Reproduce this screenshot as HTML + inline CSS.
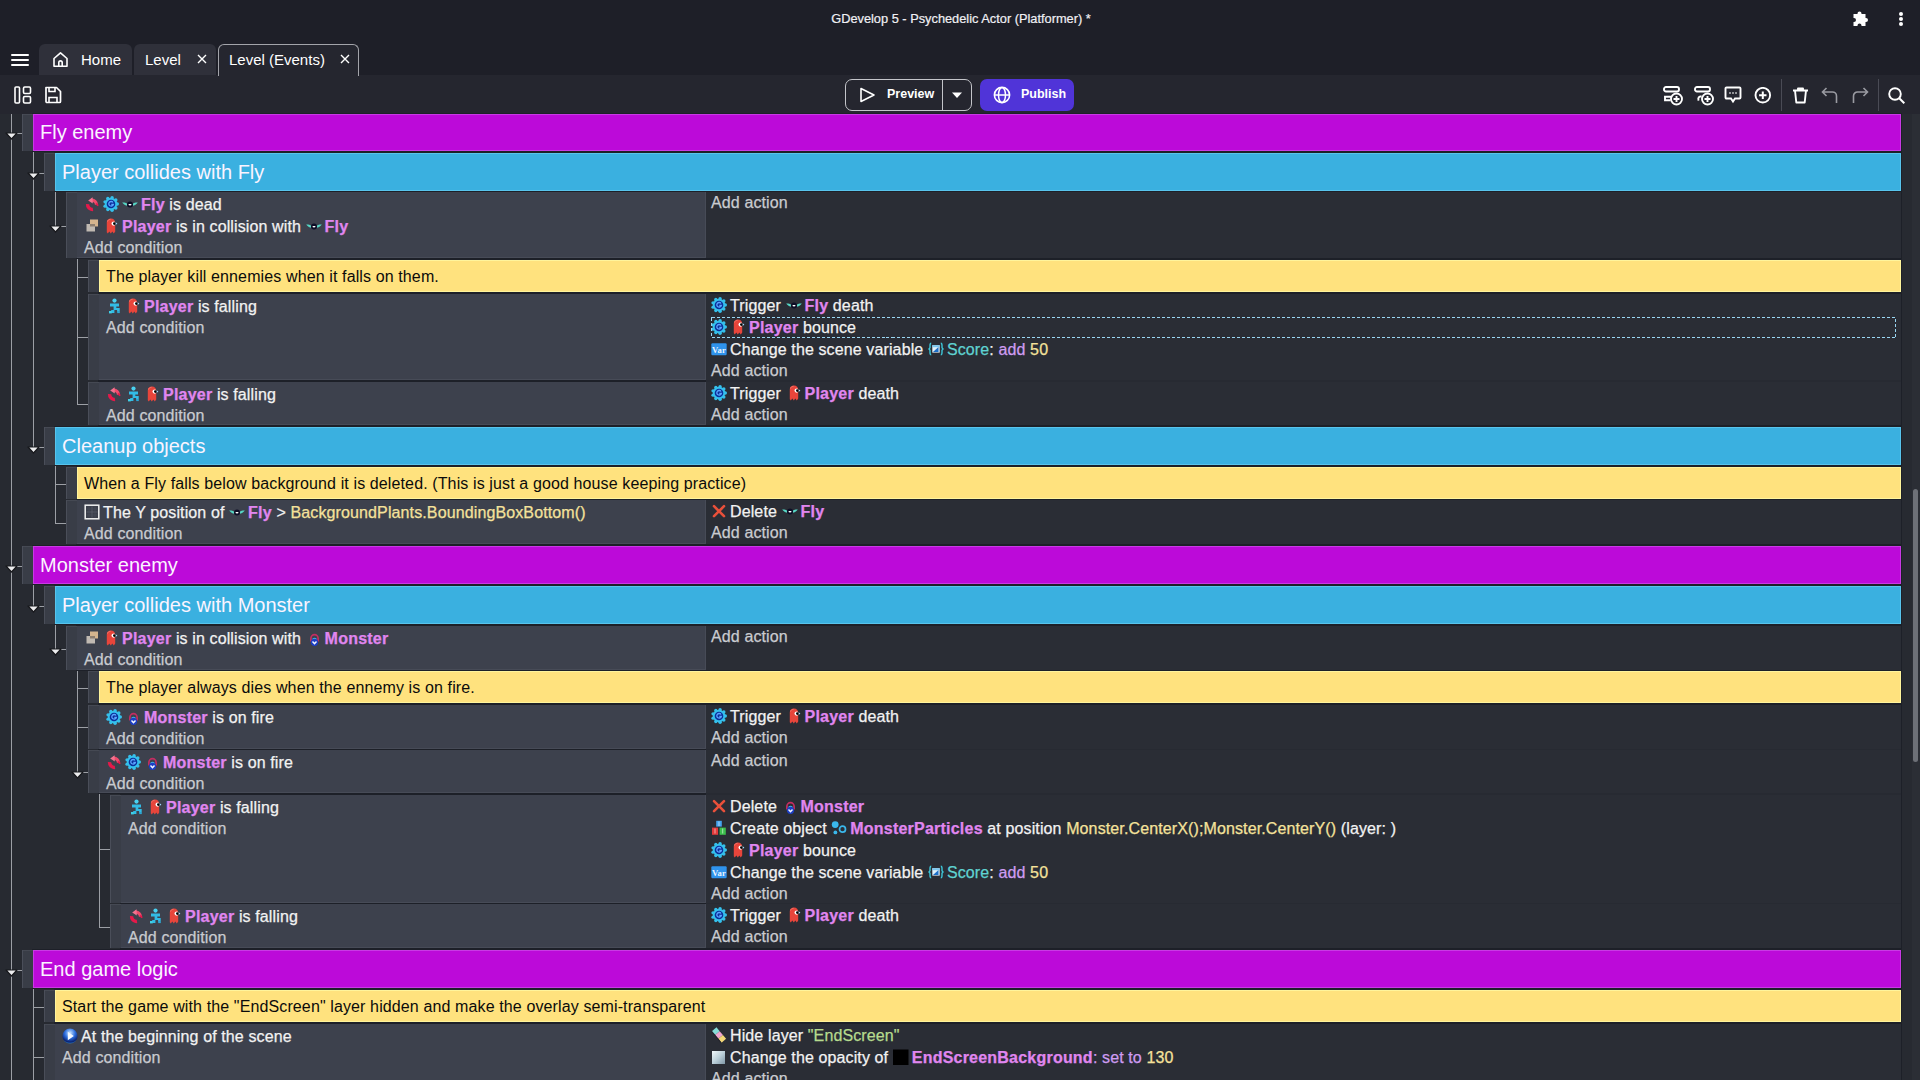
<!DOCTYPE html><html><head><meta charset="utf-8"><style>

*{margin:0;padding:0;box-sizing:border-box}
html,body{width:1920px;height:1080px;overflow:hidden;background:#272a31;font-family:"Liberation Sans",sans-serif}
body>div,body>svg{position:absolute}
.r{position:absolute;white-space:nowrap;font-size:16px;line-height:22px;height:22px;color:#f2f2f2;letter-spacing:0.12px;-webkit-text-stroke:0.25px currentColor}
.r .b{display:inline-block;width:16px;height:16px;margin-right:3px;vertical-align:-2px;font-style:normal}
.r .b svg{display:block}
.r b.o{font-weight:bold;color:#e086f0;letter-spacing:0.22px}
.ad{color:#c9cbd0}
.ex{color:#f5e29b}
.va{color:#5fd3d2}
.op{color:#cf9cf2}
.st{color:#b6db8e}
.g{position:absolute;white-space:nowrap;font-size:20px;color:#fbf4ff}
.cm{position:absolute;white-space:nowrap;font-size:16px;line-height:22px;color:#0b0b0b;letter-spacing:0.12px}
.tb{position:absolute;white-space:nowrap;color:#fff}

</style></head><body>
<div style="left:0px;top:0px;width:1920px;height:75px;background:#1e1f28;"></div>
<div class="tb" style="left:1px;top:10px;width:1920px;text-align:center;font-size:12.8px;line-height:18px;color:#f0f0f4;-webkit-text-stroke:0.2px #f0f0f4">GDevelop 5 - Psychedelic Actor (Platformer) *</div>
<svg style="position:absolute;left:1852px;top:11px" width="17" height="16" viewBox="0 0 17 16"><path d="M7.5 0.5a2 2 0 0 1 2 2V3h4v4h.5a2 2 0 0 1 0 4H13.5v4h-4v-.5a2 2 0 0 0-4 0v.5h-4v-4h.5a2 2 0 0 0 0-4H1.5V3h4v-.5a2 2 0 0 1 2-2z" fill="#fff"/></svg>
<div style="left:1899px;top:12px;width:4px;height:4px;border-radius:2px;background:#fff"></div>
<div style="left:1899px;top:17px;width:4px;height:4px;border-radius:2px;background:#fff"></div>
<div style="left:1899px;top:22px;width:4px;height:4px;border-radius:2px;background:#fff"></div>
<div style="left:11px;top:54px;width:18px;height:2px;border-radius:1px;background:#fff"></div>
<div style="left:11px;top:59px;width:18px;height:2px;border-radius:1px;background:#fff"></div>
<div style="left:11px;top:64px;width:18px;height:2px;border-radius:1px;background:#fff"></div>
<div style="left:39px;top:44px;width:93px;height:31px;background:#2f303a;border-radius:6px 6px 0 0"></div>
<div style="left:134px;top:44px;width:82px;height:31px;background:#2f303a;border-radius:6px 6px 0 0"></div>
<div style="left:0px;top:75px;width:1920px;height:39px;background:#25262f;"></div>
<div style="left:218px;top:44px;width:141px;height:32px;background:#25262f;border:1.5px solid #a3a4aa;border-bottom:none;border-radius:6px 6px 0 0"></div>
<svg style="position:absolute;left:52px;top:51px" width="17" height="17" viewBox="0 0 17 17"><path d="M2 7.5L8.5 1.8 15 7.5V15.2H2z" fill="none" stroke="#fff" stroke-width="1.6" stroke-linejoin="round"/><path d="M6.8 15.2v-3.6a1.7 1.7 0 0 1 3.4 0v3.6" fill="none" stroke="#fff" stroke-width="1.6"/></svg>
<div class="tb" style="left:81px;top:51px;font-size:15px;line-height:18px">Home</div>
<div class="tb" style="left:145px;top:51px;font-size:15px;line-height:18px">Level</div>
<div class="tb" style="left:229px;top:51px;font-size:15px;line-height:18px">Level (Events)</div>
<svg style="position:absolute;left:197px;top:54px" width="10" height="10" viewBox="0 0 10 10"><path d="M1 1l8 8M9 1L1 9" stroke="#fff" stroke-width="1.4"/></svg>
<svg style="position:absolute;left:340px;top:54px" width="10" height="10" viewBox="0 0 10 10"><path d="M1 1l8 8M9 1L1 9" stroke="#fff" stroke-width="1.4"/></svg>
<svg style="position:absolute;left:14px;top:86px" width="18" height="18" viewBox="0 0 18 18"><rect x="1" y="1" width="4.5" height="16" rx="1" fill="none" stroke="#fff" stroke-width="1.6"/><rect x="9.5" y="1" width="7" height="6.5" rx="1.2" fill="none" stroke="#fff" stroke-width="1.6"/><rect x="9.5" y="10.5" width="7" height="6.5" rx="1.2" fill="none" stroke="#fff" stroke-width="1.6"/></svg>
<svg style="position:absolute;left:44px;top:86px" width="18" height="18" viewBox="0 0 18 18"><path d="M2 1.5h10.5l4 4v10a1 1 0 0 1-1 1H3a1 1 0 0 1-1-1z" fill="none" stroke="#fff" stroke-width="1.7" stroke-linejoin="round"/><path d="M5 1.5v4h6v-4M5 16.5v-5h8v5" fill="none" stroke="#fff" stroke-width="1.6"/></svg>
<div style="left:845px;top:79px;width:127px;height:32px;border:1.3px solid #c4c5ca;border-radius:7px"></div>
<div style="left:942px;top:80px;width:1px;height:30px;background:#c4c5ca;"></div>
<svg style="position:absolute;left:859px;top:87px" width="17" height="16" viewBox="0 0 17 16"><path d="M2 1.5L15 8 2 14.5z" fill="none" stroke="#fff" stroke-width="1.6" stroke-linejoin="round"/></svg>
<div class="tb" style="left:887px;top:86px;font-size:12.5px;line-height:16px;font-weight:bold">Preview</div>
<svg style="position:absolute;left:951px;top:92px" width="12" height="7" viewBox="0 0 12 7"><path d="M1 0.5h10L6 6z" fill="#fff"/></svg>
<div style="left:980px;top:79px;width:94px;height:32px;background:#5034d8;border-radius:7px"></div>
<svg style="position:absolute;left:993px;top:86px" width="18" height="18" viewBox="0 0 18 18"><circle cx="9" cy="9" r="7.6" fill="none" stroke="#fff" stroke-width="1.6"/><ellipse cx="9" cy="9" rx="3.5" ry="7.6" fill="none" stroke="#fff" stroke-width="1.5"/><path d="M1.5 9h15" stroke="#fff" stroke-width="1.5"/></svg>
<div class="tb" style="left:1021px;top:86px;font-size:12.5px;line-height:16px;font-weight:bold">Publish</div>
<svg style="position:absolute;left:1663px;top:86px" width="21" height="20" viewBox="0 0 21 20"><rect x="1" y="1" width="15" height="4.5" rx="2" stroke="#fff" stroke-width="1.9" fill="none"/><path d="M8.5 10.8H2v3.4H7.5" stroke="#fff" stroke-width="1.9" fill="none"/><circle cx="13.5" cy="13" r="5.5" stroke="#fff" stroke-width="1.9" fill="none"/><path d="M13.5 10v6M10.5 13h6" stroke="#fff" stroke-width="1.9" fill="none"/></svg>
<svg style="position:absolute;left:1694px;top:86px" width="21" height="20" viewBox="0 0 21 20"><rect x="1" y="1" width="15" height="4.5" rx="2" stroke="#fff" stroke-width="1.9" fill="none"/><path d="M7.5 10.2C5 10.2 3.6 11.8 4.6 14.6" stroke="#fff" stroke-width="1.9" fill="none"/><circle cx="13.5" cy="13" r="5.5" stroke="#fff" stroke-width="1.9" fill="none"/><path d="M13.5 10v6M10.5 13h6" stroke="#fff" stroke-width="1.9" fill="none"/></svg>
<svg style="position:absolute;left:1724px;top:86px" width="18" height="18" viewBox="0 0 18 18"><path d="M2.5 1.5h13a1 1 0 0 1 1 1v9a1 1 0 0 1-1 1h-4.5L9 15.5 7 12.5H2.5a1 1 0 0 1-1-1v-9a1 1 0 0 1 1-1z" stroke="#fff" stroke-width="1.9" fill="none"/><path d="M5.5 7h1M8.5 7h1M11.5 7h1" stroke="#fff" stroke-width="1.8"/></svg>
<svg style="position:absolute;left:1754px;top:87px" width="18" height="17" viewBox="0 0 18 17"><circle cx="8.8" cy="8.2" r="7.3" stroke="#fff" stroke-width="1.9" fill="none"/><path d="M8.8 4.5v7.4M5.1 8.2h7.4" stroke="#fff" stroke-width="2"/></svg>
<div style="left:1781px;top:79px;width:1px;height:32px;background:#4a4b55;"></div>
<svg style="position:absolute;left:1792px;top:87px" width="17" height="17" viewBox="0 0 17 17"><path d="M1 3.5h15M6 3.5V1.5h5v2M3 3.5l1.3 12h8.4L14 3.5" stroke="#fff" stroke-width="1.9" fill="none" stroke-linejoin="round"/></svg>
<svg style="position:absolute;left:1821px;top:87px" width="18" height="17" viewBox="0 0 18 17"><path d="M5.5 1L1.5 5l4 4M1.5 5h10a4 4 0 0 1 4 4v7" stroke="#9a9ba2" stroke-width="1.6" fill="none"/></svg>
<svg style="position:absolute;left:1851px;top:87px" width="18" height="17" viewBox="0 0 18 17"><path d="M12.5 1l4 4-4 4M16.5 5h-10a4 4 0 0 0-4 4v7" stroke="#9a9ba2" stroke-width="1.6" fill="none"/></svg>
<div style="left:1878px;top:79px;width:1px;height:32px;background:#4a4b55;"></div>
<svg style="position:absolute;left:1888px;top:87px" width="18" height="17" viewBox="0 0 18 17"><circle cx="7" cy="7" r="5.8" stroke="#fff" stroke-width="1.9" fill="none"/><path d="M11.3 11.3l5 5" stroke="#fff" stroke-width="2"/></svg>
<div style="left:0px;top:114px;width:1920px;height:966px;background:#272a31;"></div>
<div style="left:1912px;top:114px;width:8px;height:966px;background:#2b2e35;"></div>
<div style="left:1913px;top:489px;width:5px;height:273px;border-radius:3px;background:#6d7077"></div>
<div style="left:11px;top:114px;width:1px;height:966px;background:#9c9fa5;"></div>
<div style="left:33px;top:151px;width:1px;height:296px;background:#9c9fa5;"></div>
<div style="left:55px;top:191px;width:1px;height:35px;background:#9c9fa5;"></div>
<div style="left:77px;top:258px;width:1px;height:146px;background:#9c9fa5;"></div>
<div style="left:55px;top:465px;width:1px;height:58px;background:#9c9fa5;"></div>
<div style="left:33px;top:584px;width:1px;height:22px;background:#9c9fa5;"></div>
<div style="left:55px;top:624px;width:1px;height:25px;background:#9c9fa5;"></div>
<div style="left:77px;top:670px;width:1px;height:102px;background:#9c9fa5;"></div>
<div style="left:99px;top:793px;width:1px;height:134px;background:#9c9fa5;"></div>
<div style="left:33px;top:988px;width:1px;height:92px;background:#9c9fa5;"></div>
<div style="left:11px;top:133px;width:11px;height:1px;background:#9c9fa5;"></div>
<div style="left:33px;top:173px;width:11px;height:1px;background:#9c9fa5;"></div>
<div style="left:55px;top:226px;width:11px;height:1px;background:#9c9fa5;"></div>
<div style="left:77px;top:277px;width:11px;height:1px;background:#9c9fa5;"></div>
<div style="left:77px;top:337px;width:11px;height:1px;background:#9c9fa5;"></div>
<div style="left:77px;top:404px;width:11px;height:1px;background:#9c9fa5;"></div>
<div style="left:33px;top:447px;width:11px;height:1px;background:#9c9fa5;"></div>
<div style="left:55px;top:484px;width:11px;height:1px;background:#9c9fa5;"></div>
<div style="left:55px;top:523px;width:11px;height:1px;background:#9c9fa5;"></div>
<div style="left:11px;top:566px;width:11px;height:1px;background:#9c9fa5;"></div>
<div style="left:33px;top:606px;width:11px;height:1px;background:#9c9fa5;"></div>
<div style="left:55px;top:649px;width:11px;height:1px;background:#9c9fa5;"></div>
<div style="left:77px;top:688px;width:11px;height:1px;background:#9c9fa5;"></div>
<div style="left:77px;top:727px;width:11px;height:1px;background:#9c9fa5;"></div>
<div style="left:77px;top:772px;width:11px;height:1px;background:#9c9fa5;"></div>
<div style="left:99px;top:849px;width:11px;height:1px;background:#9c9fa5;"></div>
<div style="left:99px;top:927px;width:11px;height:1px;background:#9c9fa5;"></div>
<div style="left:11px;top:970px;width:11px;height:1px;background:#9c9fa5;"></div>
<div style="left:33px;top:1007px;width:11px;height:1px;background:#9c9fa5;"></div>
<div style="left:33px;top:1057px;width:11px;height:1px;background:#9c9fa5;"></div>
<svg style="position:absolute;left:5px;top:132px" width="13" height="9" viewBox="0 0 13 9"><path d="M1 1h11L6.5 7z" fill="#ececee" stroke="#17181c" stroke-width="1.2" stroke-linejoin="round"/></svg>
<svg style="position:absolute;left:27px;top:172px" width="13" height="9" viewBox="0 0 13 9"><path d="M1 1h11L6.5 7z" fill="#ececee" stroke="#17181c" stroke-width="1.2" stroke-linejoin="round"/></svg>
<svg style="position:absolute;left:49px;top:225px" width="13" height="9" viewBox="0 0 13 9"><path d="M1 1h11L6.5 7z" fill="#ececee" stroke="#17181c" stroke-width="1.2" stroke-linejoin="round"/></svg>
<svg style="position:absolute;left:27px;top:446px" width="13" height="9" viewBox="0 0 13 9"><path d="M1 1h11L6.5 7z" fill="#ececee" stroke="#17181c" stroke-width="1.2" stroke-linejoin="round"/></svg>
<svg style="position:absolute;left:5px;top:565px" width="13" height="9" viewBox="0 0 13 9"><path d="M1 1h11L6.5 7z" fill="#ececee" stroke="#17181c" stroke-width="1.2" stroke-linejoin="round"/></svg>
<svg style="position:absolute;left:27px;top:605px" width="13" height="9" viewBox="0 0 13 9"><path d="M1 1h11L6.5 7z" fill="#ececee" stroke="#17181c" stroke-width="1.2" stroke-linejoin="round"/></svg>
<svg style="position:absolute;left:49px;top:648px" width="13" height="9" viewBox="0 0 13 9"><path d="M1 1h11L6.5 7z" fill="#ececee" stroke="#17181c" stroke-width="1.2" stroke-linejoin="round"/></svg>
<svg style="position:absolute;left:71px;top:771px" width="13" height="9" viewBox="0 0 13 9"><path d="M1 1h11L6.5 7z" fill="#ececee" stroke="#17181c" stroke-width="1.2" stroke-linejoin="round"/></svg>
<svg style="position:absolute;left:5px;top:969px" width="13" height="9" viewBox="0 0 13 9"><path d="M1 1h11L6.5 7z" fill="#ececee" stroke="#17181c" stroke-width="1.2" stroke-linejoin="round"/></svg>
<div style="left:32px;top:113px;width:1870px;height:39px;background:#1d2028;"></div>
<div style="left:22px;top:114px;width:11px;height:37px;background:#393d47;box-shadow:inset 1px 0 0 #4a4e59, inset 0 1px 0 #454953"></div>
<div style="left:33px;top:114px;width:1868px;height:37px;background:#bc0ad9;box-shadow:inset 0 0 0 1px #c93ae4"></div>
<div class="g" style="left:40px;top:114px;height:37px;line-height:37px">Fly enemy</div>
<div style="left:54px;top:152px;width:1848px;height:40px;background:#1d2028;"></div>
<div style="left:44px;top:153px;width:11px;height:38px;background:#393d47;box-shadow:inset 1px 0 0 #4a4e59, inset 0 1px 0 #454953"></div>
<div style="left:55px;top:153px;width:1846px;height:38px;background:#3ab0e0;box-shadow:inset 0 0 0 1px #58c4ec"></div>
<div class="g" style="left:62px;top:153px;height:38px;line-height:38px">Player collides with Fly</div>
<div style="left:76px;top:191px;width:1826px;height:68px;background:#1d2028;"></div>
<div style="left:66px;top:192px;width:11px;height:66px;background:#393d47;box-shadow:inset 1px 0 0 #4a4e59, inset 0 1px 0 #454953"></div>
<div style="left:77px;top:192px;width:629px;height:66px;background:#3d414d;box-shadow:inset -1px -1px 0 #474b57"></div>
<div style="left:706px;top:192px;width:1195px;height:66px;background:#2a2d35;"></div>
<div class="r" style="left:84px;top:194px"><i class="b"><svg class="ic" width="16" height="16" viewBox="0 0 16 16"><path d="M7.5 4.2a4.6 4.6 0 0 1 5 4.6" stroke="#ef4a6c" stroke-width="3.2" fill="none"/><path d="M4.2 4.4L8.6 1.2 8.8 7.6z" fill="#f3738f"/><path d="M3.6 8.2a4.8 4.8 0 0 0 5.4 5.2" stroke="#e5194a" stroke-width="3.4" fill="none"/><path d="M12.4 9.2l1.5-1.2" stroke="#e5194a" stroke-width="3"/></svg></i><i class="b"><svg class="ic" width="16" height="16" viewBox="0 0 16 16"><g fill="#35c0ec"><circle cx="14.30" cy="8.00" r="1.7"/><circle cx="12.83" cy="12.05" r="1.7"/><circle cx="9.09" cy="14.20" r="1.7"/><circle cx="4.85" cy="13.46" r="1.7"/><circle cx="2.08" cy="10.15" r="1.7"/><circle cx="2.08" cy="5.85" r="1.7"/><circle cx="4.85" cy="2.54" r="1.7"/><circle cx="9.09" cy="1.80" r="1.7"/><circle cx="12.83" cy="3.95" r="1.7"/><circle cx="8" cy="8" r="6.2"/></g><circle cx="8" cy="8" r="4.3" fill="#0a2f9a"/><path d="M10 6.5a2.3 2.3 0 1 0 .3 2H8.3" stroke="#5aa4ff" stroke-width="1.3" fill="none"/></svg></i><i class="b"><svg class="ic" width="16" height="16" viewBox="0 0 16 16"><path d="M0.2 6.6C2 6.4 4 7 5.4 7.8L4.8 9.8C3 9.2 1.2 8 0.2 6.6z" fill="#56d6c4"/><path d="M15.8 6.6C14 6.4 12 7 10.6 7.8l.6 2C13 9.2 14.8 8 15.8 6.6z" fill="#56d6c4"/><circle cx="8" cy="8.4" r="3" fill="#0e0e26"/><path d="M6.5 8.1a1.5 1.5 0 0 0 3 0z" fill="#fff"/></svg></i><b class="o">Fly</b> is dead</div>
<div class="r" style="left:84px;top:216px"><i class="b"><svg class="ic" width="16" height="16" viewBox="0 0 16 16"><rect x="6" y="1.5" width="8" height="7" fill="#d5b48e"/><rect x="2.5" y="6" width="8.5" height="7.5" fill="#c0b9b2"/><rect x="6" y="6" width="5" height="2.5" fill="#8d7e70"/></svg></i><i class="b"><svg class="ic" width="16" height="16" viewBox="0 0 16 16"><path d="M3.8 4.2C3.8 1.8 5.6 0.6 8 0.6c2.6 0 4.2 1.8 4.2 4.2v8.8l-1.4 1.8-1.5-1.8-1.5 1.8-1.5-1.8-1.5 1.8-1-1.2z" fill="#e8453b"/><path d="M4.5 3.5C5 2 6 1.4 7.5 1.3" stroke="#f07a70" stroke-width="1" fill="none"/><circle cx="10.6" cy="5.6" r="2.1" fill="#fff"/><circle cx="11.4" cy="5.6" r="1.4" fill="#000"/><circle cx="13.4" cy="5.6" r=".8" fill="#9fd8ff"/></svg></i><b class="o">Player</b> is in collision with <i class="b"><svg class="ic" width="16" height="16" viewBox="0 0 16 16"><path d="M0.2 6.6C2 6.4 4 7 5.4 7.8L4.8 9.8C3 9.2 1.2 8 0.2 6.6z" fill="#56d6c4"/><path d="M15.8 6.6C14 6.4 12 7 10.6 7.8l.6 2C13 9.2 14.8 8 15.8 6.6z" fill="#56d6c4"/><circle cx="8" cy="8.4" r="3" fill="#0e0e26"/><path d="M6.5 8.1a1.5 1.5 0 0 0 3 0z" fill="#fff"/></svg></i><b class="o">Fly</b></div>
<div class="r" style="left:84px;top:237px"><span class="ad">Add condition</span></div>
<div class="r" style="left:711px;top:192px"><span class="ad">Add action</span></div>
<div style="left:98px;top:259px;width:1804px;height:34px;background:#1d2028;"></div>
<div style="left:88px;top:260px;width:11px;height:32px;background:#393d47;box-shadow:inset 1px 0 0 #4a4e59, inset 0 1px 0 #454953"></div>
<div style="left:99px;top:260px;width:1802px;height:32px;background:#ffe27e;box-shadow:inset 0 0 0 1px #fff49c"></div>
<div class="cm" style="left:106px;top:266px">The player kill ennemies when it falls on them.</div>
<div style="left:98px;top:293px;width:1804px;height:88px;background:#1d2028;"></div>
<div style="left:88px;top:294px;width:11px;height:86px;background:#393d47;box-shadow:inset 1px 0 0 #4a4e59, inset 0 1px 0 #454953"></div>
<div style="left:99px;top:294px;width:607px;height:86px;background:#3d414d;box-shadow:inset -1px -1px 0 #474b57"></div>
<div style="left:706px;top:294px;width:1195px;height:86px;background:#2a2d35;"></div>
<div class="r" style="left:106px;top:296px"><i class="b"><svg class="ic" width="16" height="16" viewBox="0 0 16 16"><circle cx="8.5" cy="2.6" r="2.1" fill="#49d2f2"/><path d="M4 5.5h9v3h-2.7v1.6h3.4v3.6h-2.6v-1.6H8.4v2.8H5.2v-2.8h2.4V8.5H4z" fill="#32bce6"/><rect x="3" y="13" width="2.8" height="2.4" fill="#3fd0e8"/><rect x="11.2" y="13.5" width="2.6" height="1.6" fill="#2aa8d8"/></svg></i><i class="b"><svg class="ic" width="16" height="16" viewBox="0 0 16 16"><path d="M3.8 4.2C3.8 1.8 5.6 0.6 8 0.6c2.6 0 4.2 1.8 4.2 4.2v8.8l-1.4 1.8-1.5-1.8-1.5 1.8-1.5-1.8-1.5 1.8-1-1.2z" fill="#e8453b"/><path d="M4.5 3.5C5 2 6 1.4 7.5 1.3" stroke="#f07a70" stroke-width="1" fill="none"/><circle cx="10.6" cy="5.6" r="2.1" fill="#fff"/><circle cx="11.4" cy="5.6" r="1.4" fill="#000"/><circle cx="13.4" cy="5.6" r=".8" fill="#9fd8ff"/></svg></i><b class="o">Player</b> is falling</div>
<div class="r" style="left:106px;top:317px"><span class="ad">Add condition</span></div>
<div class="r" style="left:711px;top:295px"><i class="b"><svg class="ic" width="16" height="16" viewBox="0 0 16 16"><g fill="#35c0ec"><circle cx="14.30" cy="8.00" r="1.7"/><circle cx="12.83" cy="12.05" r="1.7"/><circle cx="9.09" cy="14.20" r="1.7"/><circle cx="4.85" cy="13.46" r="1.7"/><circle cx="2.08" cy="10.15" r="1.7"/><circle cx="2.08" cy="5.85" r="1.7"/><circle cx="4.85" cy="2.54" r="1.7"/><circle cx="9.09" cy="1.80" r="1.7"/><circle cx="12.83" cy="3.95" r="1.7"/><circle cx="8" cy="8" r="6.2"/></g><circle cx="8" cy="8" r="4.3" fill="#0a2f9a"/><path d="M10 6.5a2.3 2.3 0 1 0 .3 2H8.3" stroke="#5aa4ff" stroke-width="1.3" fill="none"/></svg></i>Trigger <i class="b"><svg class="ic" width="16" height="16" viewBox="0 0 16 16"><path d="M0.2 6.6C2 6.4 4 7 5.4 7.8L4.8 9.8C3 9.2 1.2 8 0.2 6.6z" fill="#56d6c4"/><path d="M15.8 6.6C14 6.4 12 7 10.6 7.8l.6 2C13 9.2 14.8 8 15.8 6.6z" fill="#56d6c4"/><circle cx="8" cy="8.4" r="3" fill="#0e0e26"/><path d="M6.5 8.1a1.5 1.5 0 0 0 3 0z" fill="#fff"/></svg></i><b class="o">Fly</b> death</div>
<div class="r" style="left:711px;top:317px"><i class="b"><svg class="ic" width="16" height="16" viewBox="0 0 16 16"><g fill="#35c0ec"><circle cx="14.30" cy="8.00" r="1.7"/><circle cx="12.83" cy="12.05" r="1.7"/><circle cx="9.09" cy="14.20" r="1.7"/><circle cx="4.85" cy="13.46" r="1.7"/><circle cx="2.08" cy="10.15" r="1.7"/><circle cx="2.08" cy="5.85" r="1.7"/><circle cx="4.85" cy="2.54" r="1.7"/><circle cx="9.09" cy="1.80" r="1.7"/><circle cx="12.83" cy="3.95" r="1.7"/><circle cx="8" cy="8" r="6.2"/></g><circle cx="8" cy="8" r="4.3" fill="#0a2f9a"/><path d="M10 6.5a2.3 2.3 0 1 0 .3 2H8.3" stroke="#5aa4ff" stroke-width="1.3" fill="none"/></svg></i><i class="b"><svg class="ic" width="16" height="16" viewBox="0 0 16 16"><path d="M3.8 4.2C3.8 1.8 5.6 0.6 8 0.6c2.6 0 4.2 1.8 4.2 4.2v8.8l-1.4 1.8-1.5-1.8-1.5 1.8-1.5-1.8-1.5 1.8-1-1.2z" fill="#e8453b"/><path d="M4.5 3.5C5 2 6 1.4 7.5 1.3" stroke="#f07a70" stroke-width="1" fill="none"/><circle cx="10.6" cy="5.6" r="2.1" fill="#fff"/><circle cx="11.4" cy="5.6" r="1.4" fill="#000"/><circle cx="13.4" cy="5.6" r=".8" fill="#9fd8ff"/></svg></i><b class="o">Player</b> bounce</div>
<div class="r" style="left:711px;top:339px"><i class="b"><svg class="ic" width="16" height="16" viewBox="0 0 16 16"><rect x="0.3" y="2.2" width="15.4" height="12" rx="1.2" fill="#2f93ec"/><text x="8" y="11.6" font-family="Liberation Serif" font-weight="bold" font-size="8.6" fill="#eaf5ff" text-anchor="middle">Var</text></svg></i>Change the scene variable <i class="b"><svg class="ic" width="16" height="16" viewBox="0 0 16 16"><path d="M3.2 2.2C2 2.2 2 3 2 4.5v2.3L1 8l1 1.2v2.3c0 1.5 0 2.3 1.2 2.3M12.8 2.2c1.2 0 1.2.8 1.2 2.3v2.3L15 8l-1 1.2v2.3c0 1.5 0 2.3-1.2 2.3" stroke="#3cc6d8" stroke-width="1.4" fill="none"/><rect x="4.3" y="4.2" width="7.4" height="7.4" fill="#dff1fb"/><path d="M4.3 4.2h7.4v2H4.3z" fill="#7cc8f0"/><path d="M5 11l5.5-5v5z" fill="#1d6fc8"/></svg></i><span class="va">Score</span>: <span class="op">add</span> <span class="ex">50</span></div>
<div class="r" style="left:711px;top:360px"><span class="ad">Add action</span></div>
<svg style="position:absolute;left:711px;top:316px" width="1186" height="23" viewBox="0 0 1186 23"><rect x="0.5" y="1.5" width="1184" height="20" fill="none" stroke="#9ad6f2" stroke-width="1" stroke-dasharray="3 2" shape-rendering="crispEdges"/></svg>
<div style="left:98px;top:381px;width:1804px;height:45px;background:#1d2028;"></div>
<div style="left:88px;top:382px;width:11px;height:43px;background:#393d47;box-shadow:inset 1px 0 0 #4a4e59, inset 0 1px 0 #454953"></div>
<div style="left:99px;top:382px;width:607px;height:43px;background:#3d414d;box-shadow:inset -1px -1px 0 #474b57"></div>
<div style="left:706px;top:382px;width:1195px;height:43px;background:#2a2d35;"></div>
<div class="r" style="left:106px;top:384px"><i class="b"><svg class="ic" width="16" height="16" viewBox="0 0 16 16"><path d="M7.5 4.2a4.6 4.6 0 0 1 5 4.6" stroke="#ef4a6c" stroke-width="3.2" fill="none"/><path d="M4.2 4.4L8.6 1.2 8.8 7.6z" fill="#f3738f"/><path d="M3.6 8.2a4.8 4.8 0 0 0 5.4 5.2" stroke="#e5194a" stroke-width="3.4" fill="none"/><path d="M12.4 9.2l1.5-1.2" stroke="#e5194a" stroke-width="3"/></svg></i><i class="b"><svg class="ic" width="16" height="16" viewBox="0 0 16 16"><circle cx="8.5" cy="2.6" r="2.1" fill="#49d2f2"/><path d="M4 5.5h9v3h-2.7v1.6h3.4v3.6h-2.6v-1.6H8.4v2.8H5.2v-2.8h2.4V8.5H4z" fill="#32bce6"/><rect x="3" y="13" width="2.8" height="2.4" fill="#3fd0e8"/><rect x="11.2" y="13.5" width="2.6" height="1.6" fill="#2aa8d8"/></svg></i><i class="b"><svg class="ic" width="16" height="16" viewBox="0 0 16 16"><path d="M3.8 4.2C3.8 1.8 5.6 0.6 8 0.6c2.6 0 4.2 1.8 4.2 4.2v8.8l-1.4 1.8-1.5-1.8-1.5 1.8-1.5-1.8-1.5 1.8-1-1.2z" fill="#e8453b"/><path d="M4.5 3.5C5 2 6 1.4 7.5 1.3" stroke="#f07a70" stroke-width="1" fill="none"/><circle cx="10.6" cy="5.6" r="2.1" fill="#fff"/><circle cx="11.4" cy="5.6" r="1.4" fill="#000"/><circle cx="13.4" cy="5.6" r=".8" fill="#9fd8ff"/></svg></i><b class="o">Player</b> is falling</div>
<div class="r" style="left:106px;top:405px"><span class="ad">Add condition</span></div>
<div class="r" style="left:711px;top:383px"><i class="b"><svg class="ic" width="16" height="16" viewBox="0 0 16 16"><g fill="#35c0ec"><circle cx="14.30" cy="8.00" r="1.7"/><circle cx="12.83" cy="12.05" r="1.7"/><circle cx="9.09" cy="14.20" r="1.7"/><circle cx="4.85" cy="13.46" r="1.7"/><circle cx="2.08" cy="10.15" r="1.7"/><circle cx="2.08" cy="5.85" r="1.7"/><circle cx="4.85" cy="2.54" r="1.7"/><circle cx="9.09" cy="1.80" r="1.7"/><circle cx="12.83" cy="3.95" r="1.7"/><circle cx="8" cy="8" r="6.2"/></g><circle cx="8" cy="8" r="4.3" fill="#0a2f9a"/><path d="M10 6.5a2.3 2.3 0 1 0 .3 2H8.3" stroke="#5aa4ff" stroke-width="1.3" fill="none"/></svg></i>Trigger <i class="b"><svg class="ic" width="16" height="16" viewBox="0 0 16 16"><path d="M3.8 4.2C3.8 1.8 5.6 0.6 8 0.6c2.6 0 4.2 1.8 4.2 4.2v8.8l-1.4 1.8-1.5-1.8-1.5 1.8-1.5-1.8-1.5 1.8-1-1.2z" fill="#e8453b"/><path d="M4.5 3.5C5 2 6 1.4 7.5 1.3" stroke="#f07a70" stroke-width="1" fill="none"/><circle cx="10.6" cy="5.6" r="2.1" fill="#fff"/><circle cx="11.4" cy="5.6" r="1.4" fill="#000"/><circle cx="13.4" cy="5.6" r=".8" fill="#9fd8ff"/></svg></i><b class="o">Player</b> death</div>
<div class="r" style="left:711px;top:404px"><span class="ad">Add action</span></div>
<div style="left:54px;top:426px;width:1848px;height:40px;background:#1d2028;"></div>
<div style="left:44px;top:427px;width:11px;height:38px;background:#393d47;box-shadow:inset 1px 0 0 #4a4e59, inset 0 1px 0 #454953"></div>
<div style="left:55px;top:427px;width:1846px;height:38px;background:#3ab0e0;box-shadow:inset 0 0 0 1px #58c4ec"></div>
<div class="g" style="left:62px;top:427px;height:38px;line-height:38px">Cleanup objects</div>
<div style="left:76px;top:466px;width:1826px;height:34px;background:#1d2028;"></div>
<div style="left:66px;top:467px;width:11px;height:32px;background:#393d47;box-shadow:inset 1px 0 0 #4a4e59, inset 0 1px 0 #454953"></div>
<div style="left:77px;top:467px;width:1824px;height:32px;background:#ffe27e;box-shadow:inset 0 0 0 1px #fff49c"></div>
<div class="cm" style="left:84px;top:473px">When a Fly falls below background it is deleted. (This is just a good house keeping practice)</div>
<div style="left:76px;top:499px;width:1826px;height:46px;background:#1d2028;"></div>
<div style="left:66px;top:500px;width:11px;height:44px;background:#393d47;box-shadow:inset 1px 0 0 #4a4e59, inset 0 1px 0 #454953"></div>
<div style="left:77px;top:500px;width:629px;height:44px;background:#3d414d;box-shadow:inset -1px -1px 0 #474b57"></div>
<div style="left:706px;top:500px;width:1195px;height:44px;background:#2a2d35;"></div>
<div class="r" style="left:84px;top:502px"><i class="b"><svg class="ic" width="16" height="16" viewBox="0 0 16 16"><rect x="1.2" y="1.2" width="13.6" height="13.6" fill="#3b3f4a" stroke="#f2f2f2" stroke-width="1.5"/><path d="M8 2.5v11M2.5 8h11" stroke="#5a5e6a" stroke-width=".8"/><path d="M5 2.5v11M11 2.5v11M2.5 5h11M2.5 11h11" stroke="#4a4e5a" stroke-width=".6"/></svg></i>The Y position of <i class="b"><svg class="ic" width="16" height="16" viewBox="0 0 16 16"><path d="M0.2 6.6C2 6.4 4 7 5.4 7.8L4.8 9.8C3 9.2 1.2 8 0.2 6.6z" fill="#56d6c4"/><path d="M15.8 6.6C14 6.4 12 7 10.6 7.8l.6 2C13 9.2 14.8 8 15.8 6.6z" fill="#56d6c4"/><circle cx="8" cy="8.4" r="3" fill="#0e0e26"/><path d="M6.5 8.1a1.5 1.5 0 0 0 3 0z" fill="#fff"/></svg></i><b class="o">Fly</b> &gt; <span class="ex">BackgroundPlants.BoundingBoxBottom()</span></div>
<div class="r" style="left:84px;top:523px"><span class="ad">Add condition</span></div>
<div class="r" style="left:711px;top:501px"><i class="b"><svg class="ic" width="16" height="16" viewBox="0 0 16 16"><path d="M3 3.2l10 10M13 3.2l-10 10" stroke="#e9503a" stroke-width="2.6" stroke-linecap="round"/></svg></i>Delete <i class="b"><svg class="ic" width="16" height="16" viewBox="0 0 16 16"><path d="M0.2 6.6C2 6.4 4 7 5.4 7.8L4.8 9.8C3 9.2 1.2 8 0.2 6.6z" fill="#56d6c4"/><path d="M15.8 6.6C14 6.4 12 7 10.6 7.8l.6 2C13 9.2 14.8 8 15.8 6.6z" fill="#56d6c4"/><circle cx="8" cy="8.4" r="3" fill="#0e0e26"/><path d="M6.5 8.1a1.5 1.5 0 0 0 3 0z" fill="#fff"/></svg></i><b class="o">Fly</b></div>
<div class="r" style="left:711px;top:522px"><span class="ad">Add action</span></div>
<div style="left:32px;top:545px;width:1870px;height:40px;background:#1d2028;"></div>
<div style="left:22px;top:546px;width:11px;height:38px;background:#393d47;box-shadow:inset 1px 0 0 #4a4e59, inset 0 1px 0 #454953"></div>
<div style="left:33px;top:546px;width:1868px;height:38px;background:#bc0ad9;box-shadow:inset 0 0 0 1px #c93ae4"></div>
<div class="g" style="left:40px;top:546px;height:38px;line-height:38px">Monster enemy</div>
<div style="left:54px;top:585px;width:1848px;height:40px;background:#1d2028;"></div>
<div style="left:44px;top:586px;width:11px;height:38px;background:#393d47;box-shadow:inset 1px 0 0 #4a4e59, inset 0 1px 0 #454953"></div>
<div style="left:55px;top:586px;width:1846px;height:38px;background:#3ab0e0;box-shadow:inset 0 0 0 1px #58c4ec"></div>
<div class="g" style="left:62px;top:586px;height:38px;line-height:38px">Player collides with Monster</div>
<div style="left:76px;top:625px;width:1826px;height:46px;background:#1d2028;"></div>
<div style="left:66px;top:626px;width:11px;height:44px;background:#393d47;box-shadow:inset 1px 0 0 #4a4e59, inset 0 1px 0 #454953"></div>
<div style="left:77px;top:626px;width:629px;height:44px;background:#3d414d;box-shadow:inset -1px -1px 0 #474b57"></div>
<div style="left:706px;top:626px;width:1195px;height:44px;background:#2a2d35;"></div>
<div class="r" style="left:84px;top:628px"><i class="b"><svg class="ic" width="16" height="16" viewBox="0 0 16 16"><rect x="6" y="1.5" width="8" height="7" fill="#d5b48e"/><rect x="2.5" y="6" width="8.5" height="7.5" fill="#c0b9b2"/><rect x="6" y="6" width="5" height="2.5" fill="#8d7e70"/></svg></i><i class="b"><svg class="ic" width="16" height="16" viewBox="0 0 16 16"><path d="M3.8 4.2C3.8 1.8 5.6 0.6 8 0.6c2.6 0 4.2 1.8 4.2 4.2v8.8l-1.4 1.8-1.5-1.8-1.5 1.8-1.5-1.8-1.5 1.8-1-1.2z" fill="#e8453b"/><path d="M4.5 3.5C5 2 6 1.4 7.5 1.3" stroke="#f07a70" stroke-width="1" fill="none"/><circle cx="10.6" cy="5.6" r="2.1" fill="#fff"/><circle cx="11.4" cy="5.6" r="1.4" fill="#000"/><circle cx="13.4" cy="5.6" r=".8" fill="#9fd8ff"/></svg></i><b class="o">Player</b> is in collision with <i class="b"><svg class="ic" width="16" height="16" viewBox="0 0 16 16"><path d="M4.9 11.5V8.3a3.6 3.6 0 0 1 7.2 0v3.2" stroke="#c42d62" stroke-width="1.7" fill="none"/><path d="M6.1 10.2a2.4 2.4 0 0 1 4.8 0z" fill="#43b8ea"/><circle cx="8.5" cy="12.3" r="3.6" fill="#1c3ec4"/><path d="M6.5 11.5l2 2.3 2-2.3" stroke="#f4f6ff" stroke-width="1.4" fill="none"/></svg></i><b class="o">Monster</b></div>
<div class="r" style="left:84px;top:649px"><span class="ad">Add condition</span></div>
<div class="r" style="left:711px;top:626px"><span class="ad">Add action</span></div>
<div style="left:98px;top:670px;width:1804px;height:34px;background:#1d2028;"></div>
<div style="left:88px;top:671px;width:11px;height:32px;background:#393d47;box-shadow:inset 1px 0 0 #4a4e59, inset 0 1px 0 #454953"></div>
<div style="left:99px;top:671px;width:1802px;height:32px;background:#ffe27e;box-shadow:inset 0 0 0 1px #fff49c"></div>
<div class="cm" style="left:106px;top:677px">The player always dies when the ennemy is on fire.</div>
<div style="left:98px;top:704px;width:1804px;height:46px;background:#1d2028;"></div>
<div style="left:88px;top:705px;width:11px;height:44px;background:#393d47;box-shadow:inset 1px 0 0 #4a4e59, inset 0 1px 0 #454953"></div>
<div style="left:99px;top:705px;width:607px;height:44px;background:#3d414d;box-shadow:inset -1px -1px 0 #474b57"></div>
<div style="left:706px;top:705px;width:1195px;height:44px;background:#2a2d35;"></div>
<div class="r" style="left:106px;top:707px"><i class="b"><svg class="ic" width="16" height="16" viewBox="0 0 16 16"><g fill="#35c0ec"><circle cx="14.30" cy="8.00" r="1.7"/><circle cx="12.83" cy="12.05" r="1.7"/><circle cx="9.09" cy="14.20" r="1.7"/><circle cx="4.85" cy="13.46" r="1.7"/><circle cx="2.08" cy="10.15" r="1.7"/><circle cx="2.08" cy="5.85" r="1.7"/><circle cx="4.85" cy="2.54" r="1.7"/><circle cx="9.09" cy="1.80" r="1.7"/><circle cx="12.83" cy="3.95" r="1.7"/><circle cx="8" cy="8" r="6.2"/></g><circle cx="8" cy="8" r="4.3" fill="#0a2f9a"/><path d="M10 6.5a2.3 2.3 0 1 0 .3 2H8.3" stroke="#5aa4ff" stroke-width="1.3" fill="none"/></svg></i><i class="b"><svg class="ic" width="16" height="16" viewBox="0 0 16 16"><path d="M4.9 11.5V8.3a3.6 3.6 0 0 1 7.2 0v3.2" stroke="#c42d62" stroke-width="1.7" fill="none"/><path d="M6.1 10.2a2.4 2.4 0 0 1 4.8 0z" fill="#43b8ea"/><circle cx="8.5" cy="12.3" r="3.6" fill="#1c3ec4"/><path d="M6.5 11.5l2 2.3 2-2.3" stroke="#f4f6ff" stroke-width="1.4" fill="none"/></svg></i><b class="o">Monster</b> is on fire</div>
<div class="r" style="left:106px;top:728px"><span class="ad">Add condition</span></div>
<div class="r" style="left:711px;top:706px"><i class="b"><svg class="ic" width="16" height="16" viewBox="0 0 16 16"><g fill="#35c0ec"><circle cx="14.30" cy="8.00" r="1.7"/><circle cx="12.83" cy="12.05" r="1.7"/><circle cx="9.09" cy="14.20" r="1.7"/><circle cx="4.85" cy="13.46" r="1.7"/><circle cx="2.08" cy="10.15" r="1.7"/><circle cx="2.08" cy="5.85" r="1.7"/><circle cx="4.85" cy="2.54" r="1.7"/><circle cx="9.09" cy="1.80" r="1.7"/><circle cx="12.83" cy="3.95" r="1.7"/><circle cx="8" cy="8" r="6.2"/></g><circle cx="8" cy="8" r="4.3" fill="#0a2f9a"/><path d="M10 6.5a2.3 2.3 0 1 0 .3 2H8.3" stroke="#5aa4ff" stroke-width="1.3" fill="none"/></svg></i>Trigger <i class="b"><svg class="ic" width="16" height="16" viewBox="0 0 16 16"><path d="M3.8 4.2C3.8 1.8 5.6 0.6 8 0.6c2.6 0 4.2 1.8 4.2 4.2v8.8l-1.4 1.8-1.5-1.8-1.5 1.8-1.5-1.8-1.5 1.8-1-1.2z" fill="#e8453b"/><path d="M4.5 3.5C5 2 6 1.4 7.5 1.3" stroke="#f07a70" stroke-width="1" fill="none"/><circle cx="10.6" cy="5.6" r="2.1" fill="#fff"/><circle cx="11.4" cy="5.6" r="1.4" fill="#000"/><circle cx="13.4" cy="5.6" r=".8" fill="#9fd8ff"/></svg></i><b class="o">Player</b> death</div>
<div class="r" style="left:711px;top:727px"><span class="ad">Add action</span></div>
<div style="left:98px;top:749px;width:1804px;height:45px;background:#1d2028;"></div>
<div style="left:88px;top:750px;width:11px;height:43px;background:#393d47;box-shadow:inset 1px 0 0 #4a4e59, inset 0 1px 0 #454953"></div>
<div style="left:99px;top:750px;width:607px;height:43px;background:#3d414d;box-shadow:inset -1px -1px 0 #474b57"></div>
<div style="left:706px;top:750px;width:1195px;height:43px;background:#2a2d35;"></div>
<div class="r" style="left:106px;top:752px"><i class="b"><svg class="ic" width="16" height="16" viewBox="0 0 16 16"><path d="M7.5 4.2a4.6 4.6 0 0 1 5 4.6" stroke="#ef4a6c" stroke-width="3.2" fill="none"/><path d="M4.2 4.4L8.6 1.2 8.8 7.6z" fill="#f3738f"/><path d="M3.6 8.2a4.8 4.8 0 0 0 5.4 5.2" stroke="#e5194a" stroke-width="3.4" fill="none"/><path d="M12.4 9.2l1.5-1.2" stroke="#e5194a" stroke-width="3"/></svg></i><i class="b"><svg class="ic" width="16" height="16" viewBox="0 0 16 16"><g fill="#35c0ec"><circle cx="14.30" cy="8.00" r="1.7"/><circle cx="12.83" cy="12.05" r="1.7"/><circle cx="9.09" cy="14.20" r="1.7"/><circle cx="4.85" cy="13.46" r="1.7"/><circle cx="2.08" cy="10.15" r="1.7"/><circle cx="2.08" cy="5.85" r="1.7"/><circle cx="4.85" cy="2.54" r="1.7"/><circle cx="9.09" cy="1.80" r="1.7"/><circle cx="12.83" cy="3.95" r="1.7"/><circle cx="8" cy="8" r="6.2"/></g><circle cx="8" cy="8" r="4.3" fill="#0a2f9a"/><path d="M10 6.5a2.3 2.3 0 1 0 .3 2H8.3" stroke="#5aa4ff" stroke-width="1.3" fill="none"/></svg></i><i class="b"><svg class="ic" width="16" height="16" viewBox="0 0 16 16"><path d="M4.9 11.5V8.3a3.6 3.6 0 0 1 7.2 0v3.2" stroke="#c42d62" stroke-width="1.7" fill="none"/><path d="M6.1 10.2a2.4 2.4 0 0 1 4.8 0z" fill="#43b8ea"/><circle cx="8.5" cy="12.3" r="3.6" fill="#1c3ec4"/><path d="M6.5 11.5l2 2.3 2-2.3" stroke="#f4f6ff" stroke-width="1.4" fill="none"/></svg></i><b class="o">Monster</b> is on fire</div>
<div class="r" style="left:106px;top:773px"><span class="ad">Add condition</span></div>
<div class="r" style="left:711px;top:750px"><span class="ad">Add action</span></div>
<div style="left:120px;top:794px;width:1782px;height:110px;background:#1d2028;"></div>
<div style="left:110px;top:795px;width:11px;height:108px;background:#393d47;box-shadow:inset 1px 0 0 #4a4e59, inset 0 1px 0 #454953"></div>
<div style="left:121px;top:795px;width:585px;height:108px;background:#3d414d;box-shadow:inset -1px -1px 0 #474b57"></div>
<div style="left:706px;top:795px;width:1195px;height:108px;background:#2a2d35;"></div>
<div class="r" style="left:128px;top:797px"><i class="b"><svg class="ic" width="16" height="16" viewBox="0 0 16 16"><circle cx="8.5" cy="2.6" r="2.1" fill="#49d2f2"/><path d="M4 5.5h9v3h-2.7v1.6h3.4v3.6h-2.6v-1.6H8.4v2.8H5.2v-2.8h2.4V8.5H4z" fill="#32bce6"/><rect x="3" y="13" width="2.8" height="2.4" fill="#3fd0e8"/><rect x="11.2" y="13.5" width="2.6" height="1.6" fill="#2aa8d8"/></svg></i><i class="b"><svg class="ic" width="16" height="16" viewBox="0 0 16 16"><path d="M3.8 4.2C3.8 1.8 5.6 0.6 8 0.6c2.6 0 4.2 1.8 4.2 4.2v8.8l-1.4 1.8-1.5-1.8-1.5 1.8-1.5-1.8-1.5 1.8-1-1.2z" fill="#e8453b"/><path d="M4.5 3.5C5 2 6 1.4 7.5 1.3" stroke="#f07a70" stroke-width="1" fill="none"/><circle cx="10.6" cy="5.6" r="2.1" fill="#fff"/><circle cx="11.4" cy="5.6" r="1.4" fill="#000"/><circle cx="13.4" cy="5.6" r=".8" fill="#9fd8ff"/></svg></i><b class="o">Player</b> is falling</div>
<div class="r" style="left:128px;top:818px"><span class="ad">Add condition</span></div>
<div class="r" style="left:711px;top:796px"><i class="b"><svg class="ic" width="16" height="16" viewBox="0 0 16 16"><path d="M3 3.2l10 10M13 3.2l-10 10" stroke="#e9503a" stroke-width="2.6" stroke-linecap="round"/></svg></i>Delete <i class="b"><svg class="ic" width="16" height="16" viewBox="0 0 16 16"><path d="M4.9 11.5V8.3a3.6 3.6 0 0 1 7.2 0v3.2" stroke="#c42d62" stroke-width="1.7" fill="none"/><path d="M6.1 10.2a2.4 2.4 0 0 1 4.8 0z" fill="#43b8ea"/><circle cx="8.5" cy="12.3" r="3.6" fill="#1c3ec4"/><path d="M6.5 11.5l2 2.3 2-2.3" stroke="#f4f6ff" stroke-width="1.4" fill="none"/></svg></i><b class="o">Monster</b></div>
<div class="r" style="left:711px;top:818px"><i class="b"><svg class="ic" width="16" height="16" viewBox="0 0 16 16"><rect x="5.2" y="0.8" width="5.6" height="5.8" fill="#45a4ee"/><rect x="1" y="7.6" width="6" height="7.2" fill="#e23a3a"/><rect x="8.6" y="7.6" width="6.2" height="7.2" fill="#3cbf4c"/><path d="M8 1.5v4.5M4 8.5v5M11.7 8.5v5" stroke="#fff" stroke-width=".7" opacity=".8"/></svg></i>Create object <i class="b"><svg class="ic" width="16" height="16" viewBox="0 0 16 16"><circle cx="4.2" cy="4.6" r="3.4" fill="#3ab8ec"/><circle cx="11.5" cy="9.2" r="3" fill="none" stroke="#3ab8ec" stroke-width="1.7"/><circle cx="4.4" cy="12.4" r="1.9" fill="#3ab8ec"/></svg></i><b class="o">MonsterParticles</b> at position <span class="ex">Monster.CenterX();Monster.CenterY()</span> (layer: )</div>
<div class="r" style="left:711px;top:840px"><i class="b"><svg class="ic" width="16" height="16" viewBox="0 0 16 16"><g fill="#35c0ec"><circle cx="14.30" cy="8.00" r="1.7"/><circle cx="12.83" cy="12.05" r="1.7"/><circle cx="9.09" cy="14.20" r="1.7"/><circle cx="4.85" cy="13.46" r="1.7"/><circle cx="2.08" cy="10.15" r="1.7"/><circle cx="2.08" cy="5.85" r="1.7"/><circle cx="4.85" cy="2.54" r="1.7"/><circle cx="9.09" cy="1.80" r="1.7"/><circle cx="12.83" cy="3.95" r="1.7"/><circle cx="8" cy="8" r="6.2"/></g><circle cx="8" cy="8" r="4.3" fill="#0a2f9a"/><path d="M10 6.5a2.3 2.3 0 1 0 .3 2H8.3" stroke="#5aa4ff" stroke-width="1.3" fill="none"/></svg></i><i class="b"><svg class="ic" width="16" height="16" viewBox="0 0 16 16"><path d="M3.8 4.2C3.8 1.8 5.6 0.6 8 0.6c2.6 0 4.2 1.8 4.2 4.2v8.8l-1.4 1.8-1.5-1.8-1.5 1.8-1.5-1.8-1.5 1.8-1-1.2z" fill="#e8453b"/><path d="M4.5 3.5C5 2 6 1.4 7.5 1.3" stroke="#f07a70" stroke-width="1" fill="none"/><circle cx="10.6" cy="5.6" r="2.1" fill="#fff"/><circle cx="11.4" cy="5.6" r="1.4" fill="#000"/><circle cx="13.4" cy="5.6" r=".8" fill="#9fd8ff"/></svg></i><b class="o">Player</b> bounce</div>
<div class="r" style="left:711px;top:862px"><i class="b"><svg class="ic" width="16" height="16" viewBox="0 0 16 16"><rect x="0.3" y="2.2" width="15.4" height="12" rx="1.2" fill="#2f93ec"/><text x="8" y="11.6" font-family="Liberation Serif" font-weight="bold" font-size="8.6" fill="#eaf5ff" text-anchor="middle">Var</text></svg></i>Change the scene variable <i class="b"><svg class="ic" width="16" height="16" viewBox="0 0 16 16"><path d="M3.2 2.2C2 2.2 2 3 2 4.5v2.3L1 8l1 1.2v2.3c0 1.5 0 2.3 1.2 2.3M12.8 2.2c1.2 0 1.2.8 1.2 2.3v2.3L15 8l-1 1.2v2.3c0 1.5 0 2.3-1.2 2.3" stroke="#3cc6d8" stroke-width="1.4" fill="none"/><rect x="4.3" y="4.2" width="7.4" height="7.4" fill="#dff1fb"/><path d="M4.3 4.2h7.4v2H4.3z" fill="#7cc8f0"/><path d="M5 11l5.5-5v5z" fill="#1d6fc8"/></svg></i><span class="va">Score</span>: <span class="op">add</span> <span class="ex">50</span></div>
<div class="r" style="left:711px;top:883px"><span class="ad">Add action</span></div>
<div style="left:120px;top:903px;width:1782px;height:46px;background:#1d2028;"></div>
<div style="left:110px;top:904px;width:11px;height:44px;background:#393d47;box-shadow:inset 1px 0 0 #4a4e59, inset 0 1px 0 #454953"></div>
<div style="left:121px;top:904px;width:585px;height:44px;background:#3d414d;box-shadow:inset -1px -1px 0 #474b57"></div>
<div style="left:706px;top:904px;width:1195px;height:44px;background:#2a2d35;"></div>
<div class="r" style="left:128px;top:906px"><i class="b"><svg class="ic" width="16" height="16" viewBox="0 0 16 16"><path d="M7.5 4.2a4.6 4.6 0 0 1 5 4.6" stroke="#ef4a6c" stroke-width="3.2" fill="none"/><path d="M4.2 4.4L8.6 1.2 8.8 7.6z" fill="#f3738f"/><path d="M3.6 8.2a4.8 4.8 0 0 0 5.4 5.2" stroke="#e5194a" stroke-width="3.4" fill="none"/><path d="M12.4 9.2l1.5-1.2" stroke="#e5194a" stroke-width="3"/></svg></i><i class="b"><svg class="ic" width="16" height="16" viewBox="0 0 16 16"><circle cx="8.5" cy="2.6" r="2.1" fill="#49d2f2"/><path d="M4 5.5h9v3h-2.7v1.6h3.4v3.6h-2.6v-1.6H8.4v2.8H5.2v-2.8h2.4V8.5H4z" fill="#32bce6"/><rect x="3" y="13" width="2.8" height="2.4" fill="#3fd0e8"/><rect x="11.2" y="13.5" width="2.6" height="1.6" fill="#2aa8d8"/></svg></i><i class="b"><svg class="ic" width="16" height="16" viewBox="0 0 16 16"><path d="M3.8 4.2C3.8 1.8 5.6 0.6 8 0.6c2.6 0 4.2 1.8 4.2 4.2v8.8l-1.4 1.8-1.5-1.8-1.5 1.8-1.5-1.8-1.5 1.8-1-1.2z" fill="#e8453b"/><path d="M4.5 3.5C5 2 6 1.4 7.5 1.3" stroke="#f07a70" stroke-width="1" fill="none"/><circle cx="10.6" cy="5.6" r="2.1" fill="#fff"/><circle cx="11.4" cy="5.6" r="1.4" fill="#000"/><circle cx="13.4" cy="5.6" r=".8" fill="#9fd8ff"/></svg></i><b class="o">Player</b> is falling</div>
<div class="r" style="left:128px;top:927px"><span class="ad">Add condition</span></div>
<div class="r" style="left:711px;top:905px"><i class="b"><svg class="ic" width="16" height="16" viewBox="0 0 16 16"><g fill="#35c0ec"><circle cx="14.30" cy="8.00" r="1.7"/><circle cx="12.83" cy="12.05" r="1.7"/><circle cx="9.09" cy="14.20" r="1.7"/><circle cx="4.85" cy="13.46" r="1.7"/><circle cx="2.08" cy="10.15" r="1.7"/><circle cx="2.08" cy="5.85" r="1.7"/><circle cx="4.85" cy="2.54" r="1.7"/><circle cx="9.09" cy="1.80" r="1.7"/><circle cx="12.83" cy="3.95" r="1.7"/><circle cx="8" cy="8" r="6.2"/></g><circle cx="8" cy="8" r="4.3" fill="#0a2f9a"/><path d="M10 6.5a2.3 2.3 0 1 0 .3 2H8.3" stroke="#5aa4ff" stroke-width="1.3" fill="none"/></svg></i>Trigger <i class="b"><svg class="ic" width="16" height="16" viewBox="0 0 16 16"><path d="M3.8 4.2C3.8 1.8 5.6 0.6 8 0.6c2.6 0 4.2 1.8 4.2 4.2v8.8l-1.4 1.8-1.5-1.8-1.5 1.8-1.5-1.8-1.5 1.8-1-1.2z" fill="#e8453b"/><path d="M4.5 3.5C5 2 6 1.4 7.5 1.3" stroke="#f07a70" stroke-width="1" fill="none"/><circle cx="10.6" cy="5.6" r="2.1" fill="#fff"/><circle cx="11.4" cy="5.6" r="1.4" fill="#000"/><circle cx="13.4" cy="5.6" r=".8" fill="#9fd8ff"/></svg></i><b class="o">Player</b> death</div>
<div class="r" style="left:711px;top:926px"><span class="ad">Add action</span></div>
<div style="left:32px;top:949px;width:1870px;height:40px;background:#1d2028;"></div>
<div style="left:22px;top:950px;width:11px;height:38px;background:#393d47;box-shadow:inset 1px 0 0 #4a4e59, inset 0 1px 0 #454953"></div>
<div style="left:33px;top:950px;width:1868px;height:38px;background:#bc0ad9;box-shadow:inset 0 0 0 1px #c93ae4"></div>
<div class="g" style="left:40px;top:950px;height:38px;line-height:38px">End game logic</div>
<div style="left:54px;top:989px;width:1848px;height:34px;background:#1d2028;"></div>
<div style="left:44px;top:990px;width:11px;height:32px;background:#393d47;box-shadow:inset 1px 0 0 #4a4e59, inset 0 1px 0 #454953"></div>
<div style="left:55px;top:990px;width:1846px;height:32px;background:#ffe27e;box-shadow:inset 0 0 0 1px #fff49c"></div>
<div class="cm" style="left:62px;top:996px">Start the game with the &quot;EndScreen&quot; layer hidden and make the overlay semi-transparent</div>
<div style="left:54px;top:1023px;width:1848px;height:74px;background:#1d2028;"></div>
<div style="left:44px;top:1024px;width:11px;height:72px;background:#393d47;box-shadow:inset 1px 0 0 #4a4e59, inset 0 1px 0 #454953"></div>
<div style="left:55px;top:1024px;width:651px;height:72px;background:#3d414d;box-shadow:inset -1px -1px 0 #474b57"></div>
<div style="left:706px;top:1024px;width:1195px;height:72px;background:#2a2d35;"></div>
<div class="r" style="left:62px;top:1026px"><i class="b"><svg class="ic" width="16" height="16" viewBox="0 0 16 16"><defs><radialGradient id="sg" cx="50%" cy="30%" r="75%"><stop offset="0" stop-color="#c8e4ff"/><stop offset=".45" stop-color="#2d6fe0"/><stop offset=".8" stop-color="#0a2270"/><stop offset="1" stop-color="#3aa8f0"/></radialGradient></defs><circle cx="8" cy="8" r="7.6" fill="url(#sg)"/><path d="M5.8 3.8l6 4.2-6 4.2z" fill="#f4f8ff"/></svg></i>At the beginning of the scene</div>
<div class="r" style="left:62px;top:1047px"><span class="ad">Add condition</span></div>
<div class="r" style="left:711px;top:1025px"><i class="b"><svg class="ic" width="16" height="16" viewBox="0 0 16 16"><g transform="rotate(-40 8 8)"><rect x="5" y="0.5" width="6" height="5" fill="#86dcd6"/><rect x="5" y="5.5" width="6" height="5" fill="#f0a6cc"/><rect x="5" y="10.5" width="6" height="5" fill="#f4d878"/><path d="M4.6 0.5v15" stroke="#22232c" stroke-width="1"/></g></svg></i>Hide layer <span class="st">&quot;EndScreen&quot;</span></div>
<div class="r" style="left:711px;top:1047px"><i class="b"><svg class="ic" width="16" height="16" viewBox="0 0 16 16"><defs><linearGradient id="og" x1="0" y1="0" x2="1" y2="1"><stop offset="0" stop-color="#f2f8fb"/><stop offset=".5" stop-color="#bcd0da"/><stop offset="1" stop-color="#7f97a6"/></linearGradient></defs><rect x="1" y="2" width="13" height="13" fill="url(#og)"/></svg></i>Change the opacity of <i class="b"><svg class="ic" width="16" height="16" viewBox="0 0 16 16"><rect x="0" y="0.5" width="15.5" height="15.5" fill="#000"/></svg></i><b class="o">EndScreenBackground</b><span class="op">: set to</span> <span class="ex">130</span></div>
<div class="r" style="left:711px;top:1068px"><span class="ad">Add action</span></div>
<div style="left:706px;top:380px;width:1195px;height:2px;background:#272a32;"></div>
<div style="left:706px;top:749px;width:1195px;height:1px;background:#272a32;"></div>
<div style="left:706px;top:793px;width:1195px;height:2px;background:#272a32;"></div>
<div style="left:706px;top:903px;width:1195px;height:1px;background:#272a32;"></div>
</body></html>
